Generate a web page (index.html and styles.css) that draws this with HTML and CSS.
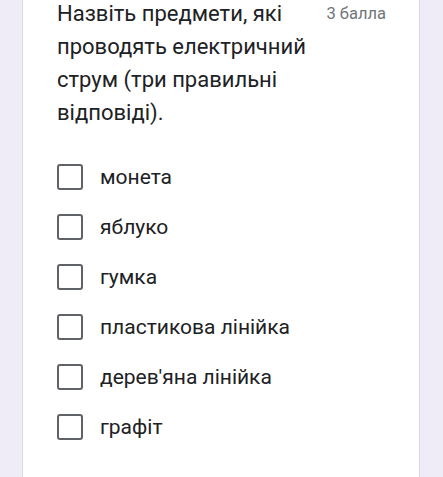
FILE: index.html
```html
<!DOCTYPE html>
<html lang="uk">
<head>
<meta charset="utf-8">
<link rel="stylesheet" href="styles.css">
</head>
<body>
<div class="card">
  <div class="head">
    <div class="title">Назвіть предмети, які проводять електричний струм (три правильні відповіді).</div>
    <div class="points">3 балла</div>
  </div>
  <ul class="options">
    <li class="option"><span class="box"></span><span class="label">монета</span></li>
    <li class="option"><span class="box"></span><span class="label">яблуко</span></li>
    <li class="option"><span class="box"></span><span class="label">гумка</span></li>
    <li class="option"><span class="box"></span><span class="label">пластикова лінійка</span></li>
    <li class="option"><span class="box"></span><span class="label">дерев'яна лінійка</span></li>
    <li class="option"><span class="box"></span><span class="label">графіт</span></li>
  </ul>
</div>
</body>
</html>
```

FILE: styles.css
```css
html, body {
  margin: 0;
  padding: 0;
}
body {
  background: #efebf7;
  font-family: Roboto, "Noto Sans", sans-serif;
  color: #202124;
  overflow: hidden;
}
.card {
  margin: 0 23px 0 22px;
  background: #fff;
  border-left: 1px solid #dcdae3;
  border-right: 1px solid #dcdae3;
  padding: 0 33px 0 34px;
  min-height: 500px;
  box-sizing: border-box;
}
.head {
  display: flex;
  align-items: flex-start;
  margin-top: -3px;
}
.title {
  flex: 1;
  font-size: 22px;
  line-height: 33px;
  padding-right: 16px;
}
.points {
  font-size: 16.5px;
  line-height: 34px;
  color: #70757a;
  white-space: nowrap;
}
.options {
  list-style: none;
  margin: 23px 0 0;
  padding: 0;
}
.option {
  display: flex;
  align-items: center;
  height: 50px;
}
.box {
  width: 22px;
  height: 22px;
  border: 2.5px solid #5f6368;
  border-radius: 3px;
  flex: none;
}
.label {
  margin-left: 17px;
  font-size: 21px;
}
```
